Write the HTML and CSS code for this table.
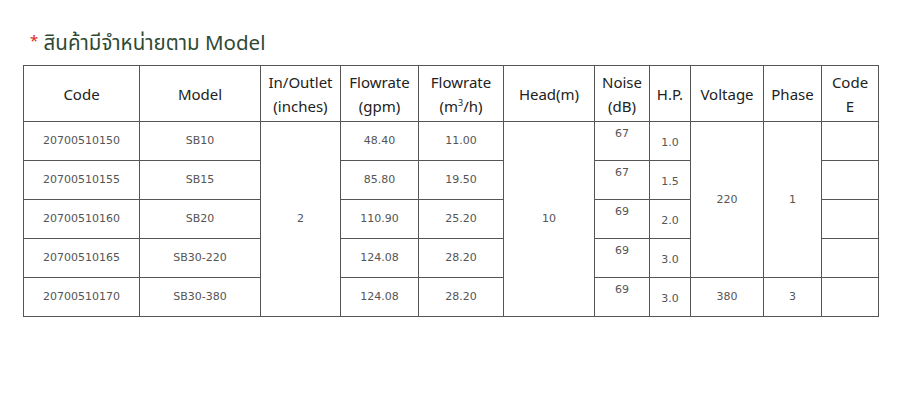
FILE: index.html
```html
<!DOCTYPE html>
<html lang="th">
<head>
<meta charset="utf-8">
<title>Model table</title>
<link rel="stylesheet" href="styles.css">
</head>
<body>
<div class="page">
  <h2 class="title"><span class="star">*</span> สินค้ามีจำหน่ายตาม Model</h2>
  <table class="spec">
    <colgroup>
      <col class="c-code"><col class="c-model"><col class="c-io"><col class="c-gpm"><col class="c-m3"><col class="c-head"><col class="c-noise"><col class="c-hp"><col class="c-volt"><col class="c-phase"><col class="c-e">
    </colgroup>
    <thead>
      <tr>
        <th>Code</th>
        <th>Model</th>
        <th>In/Outlet<br>(inches)</th>
        <th>Flowrate<br>(gpm)</th>
        <th>Flowrate<br>(m<sup>3</sup>/h)</th>
        <th>Head(m)</th>
        <th>Noise<br>(dB)</th>
        <th>H.P.</th>
        <th>Voltage</th>
        <th>Phase</th>
        <th>Code<br>E</th>
      </tr>
    </thead>
    <tbody>
      <tr>
        <td>20700510150</td>
        <td>SB10</td>
        <td rowspan="5">2</td>
        <td>48.40</td>
        <td>11.00</td>
        <td rowspan="5">10</td>
        <td class="noise">67</td>
        <td class="hp">1.0</td>
        <td rowspan="4">220</td>
        <td rowspan="4">1</td>
        <td></td>
      </tr>
      <tr>
        <td>20700510155</td>
        <td>SB15</td>
        <td>85.80</td>
        <td>19.50</td>
        <td class="noise">67</td>
        <td class="hp">1.5</td>
        <td></td>
      </tr>
      <tr>
        <td>20700510160</td>
        <td>SB20</td>
        <td>110.90</td>
        <td>25.20</td>
        <td class="noise">69</td>
        <td class="hp">2.0</td>
        <td></td>
      </tr>
      <tr>
        <td>20700510165</td>
        <td>SB30-220</td>
        <td>124.08</td>
        <td>28.20</td>
        <td class="noise">69</td>
        <td class="hp">3.0</td>
        <td></td>
      </tr>
      <tr>
        <td>20700510170</td>
        <td>SB30-380</td>
        <td>124.08</td>
        <td>28.20</td>
        <td class="noise">69</td>
        <td class="hp">3.0</td>
        <td>380</td>
        <td>3</td>
        <td></td>
      </tr>
    </tbody>
  </table>
</div>
</body>
</html>
```

FILE: styles.css
```css
html, body {
  margin: 0;
  padding: 0;
  background: #ffffff;
}

.page {
  padding: 26px 0 0 23px;
}

.title {
  margin: 0 0 9px 7px;
  font-family: "Noto Sans", "Noto Sans Thai", sans-serif;
  font-size: 20.5px;
  font-weight: normal;
  line-height: 28px;
  color: #2f4a35;
}

.star {
  color: #e02424;
  font-size: 15px;
  vertical-align: 4px;
}

.spec {
  border-collapse: collapse;
  table-layout: fixed;
  width: 854px;
}

.c-code { width: 116px; }
.c-model { width: 121px; }
.c-io { width: 80px; }
.c-gpm { width: 78px; }
.c-m3 { width: 85px; }
.c-head { width: 91px; }
.c-noise { width: 55px; }
.c-hp { width: 41px; }
.c-volt { width: 73px; }
.c-phase { width: 58px; }
.c-e { width: 57px; }

.spec thead tr { height: 56px; }
.spec tbody tr { height: 39px; }

.spec th,
.spec td {
  border: 1px solid #555555;
  text-align: center;
  vertical-align: middle;
  padding: 0;
}

.spec th {
  font-family: "Noto Sans", sans-serif;
  font-size: 15px;
  font-weight: normal;
  line-height: 24px;
  color: #222222;
}

.spec th sup {
  font-size: 9px;
  line-height: 0;
  vertical-align: 6px;
}

.spec td {
  font-family: "DejaVu Sans", sans-serif;
  font-size: 11px;
  line-height: 14px;
  color: #555555;
}

.spec td.noise {
  vertical-align: top;
  padding-top: 5px;
}

.spec td.hp {
  padding-top: 4px;
}
```
